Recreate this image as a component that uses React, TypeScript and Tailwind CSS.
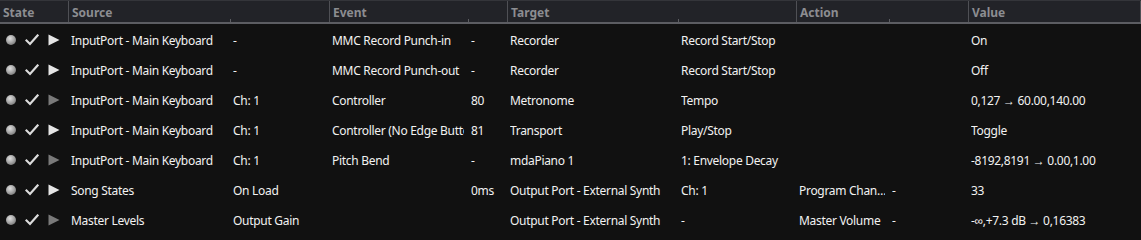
import React from "react";

type Row = {
  on: boolean;
  src: string;
  srcSub: string;
  ev: string;
  evSub: string;
  tgt: string;
  tgtSub: string;
  act: string;
  actSub: string;
  val: string;
};

const rows: Row[] = [
  { on: true, src: "InputPort - Main Keyboard", srcSub: "-", ev: "MMC Record Punch-in", evSub: "-", tgt: "Recorder", tgtSub: "Record Start/Stop", act: "", actSub: "", val: "On" },
  { on: true, src: "InputPort - Main Keyboard", srcSub: "-", ev: "MMC Record Punch-out", evSub: "-", tgt: "Recorder", tgtSub: "Record Start/Stop", act: "", actSub: "", val: "Off" },
  { on: false, src: "InputPort - Main Keyboard", srcSub: "Ch: 1", ev: "Controller", evSub: "80", tgt: "Metronome", tgtSub: "Tempo", act: "", actSub: "", val: "0,127 → 60.00,140.00" },
  { on: true, src: "InputPort - Main Keyboard", srcSub: "Ch: 1", ev: "Controller (No Edge Button)", evSub: "81", tgt: "Transport", tgtSub: "Play/Stop", act: "", actSub: "", val: "Toggle" },
  { on: false, src: "InputPort - Main Keyboard", srcSub: "Ch: 1", ev: "Pitch Bend", evSub: "-", tgt: "mdaPiano 1", tgtSub: "1: Envelope Decay", act: "", actSub: "", val: "-8192,8191 → 0.00,1.00" },
  { on: true, src: "Song States", srcSub: "On Load", ev: "", evSub: "0ms", tgt: "Output Port - External Synth", tgtSub: "Ch: 1", act: "Program Chan…", actSub: "-", val: "33" },
  { on: false, src: "Master Levels", srcSub: "Output Gain", ev: "", evSub: "", tgt: "Output Port - External Synth", tgtSub: "-", act: "Master Volume", actSub: "-", val: "-∞,+7.3 dB → 0,16383" },
];

const cols = "grid-cols-[68px_162px_99px_139px_39px_171px_118px_93px_79px_1fr]";

function Dot() {
  return (
    <span className="block w-[10px] h-[10px] rounded-full bg-[radial-gradient(circle_at_40%_35%,#e0e0e0_0%,#a8a8a8_45%,#5a5a5a_100%)]" />
  );
}

function Check() {
  return (
    <svg width="14" height="12" viewBox="0 0 14 12" className="block">
      <polyline points="1.5,6.5 5,10 12.5,1.5" fill="none" stroke="#dcdcdc" strokeWidth="2.2" strokeLinecap="square" />
    </svg>
  );
}

function Play({ on }: { on: boolean }) {
  return (
    <svg width="12" height="12" viewBox="0 0 12 12" className="block">
      <polygon points="0.5,0.5 11.5,6 0.5,11.5" fill={on ? "#e6e6e6" : "#7a7a7a"} />
    </svg>
  );
}

function Head({ label, tick }: { label: string; tick?: string }) {
  return (
    <div className="relative flex items-center h-full border-l border-[#4f5055] pl-[3px] pt-[2px] first:border-l-0">
      <span>{label}</span>
      {tick && <span className={`absolute bottom-0 ${tick} w-px h-[3px] bg-[#5c5d62]`} />}
    </div>
  );
}

function Cell({ children }: { children?: React.ReactNode }) {
  return <div className="ml-[3px] mr-[4px] pt-[3px] overflow-hidden whitespace-nowrap">{children}</div>;
}

export default function App() {
  return (
    <div className="w-[1141px] h-[240px] bg-[#111111] text-[#f2f2f2] text-[12px] tracking-[-0.3px] font-['Noto_Sans',sans-serif] overflow-hidden">
      <div className="grid grid-cols-[68px_261px_178px_289px_172px_1fr] h-6 bg-[#222328] border-t border-[#34353a] border-b-2 border-b-[#5c5d62] text-[#8c8d91] font-bold tracking-normal">
        <Head label="State" />
        <Head label="Source" tick="left-[161px]" />
        <Head label="Event" tick="left-[138px]" />
        <Head label="Target" tick="left-[170px]" />
        <Head label="Action" tick="left-[92px]" />
        <div className="flex items-center h-full border-l border-r border-[#4f5055] pl-[3px] pt-[2px]">Value</div>
      </div>
      {rows.map((r, i) => (
        <div key={i} className={`grid ${cols} h-[30px] items-center`}>
          <div className="flex items-center pl-[6px] pt-[2px]">
            <Dot />
            <span className="ml-[9px]"><Check /></span>
            <span className="ml-[9px]"><Play on={r.on} /></span>
          </div>
          <Cell>{r.src}</Cell>
          <Cell>{r.srcSub}</Cell>
          <Cell>{r.ev}</Cell>
          <Cell>{r.evSub}</Cell>
          <Cell>{r.tgt}</Cell>
          <Cell>{r.tgtSub}</Cell>
          <Cell>{r.act}</Cell>
          <Cell>{r.actSub}</Cell>
          <Cell>{r.val}</Cell>
        </div>
      ))}
    </div>
  );
}
